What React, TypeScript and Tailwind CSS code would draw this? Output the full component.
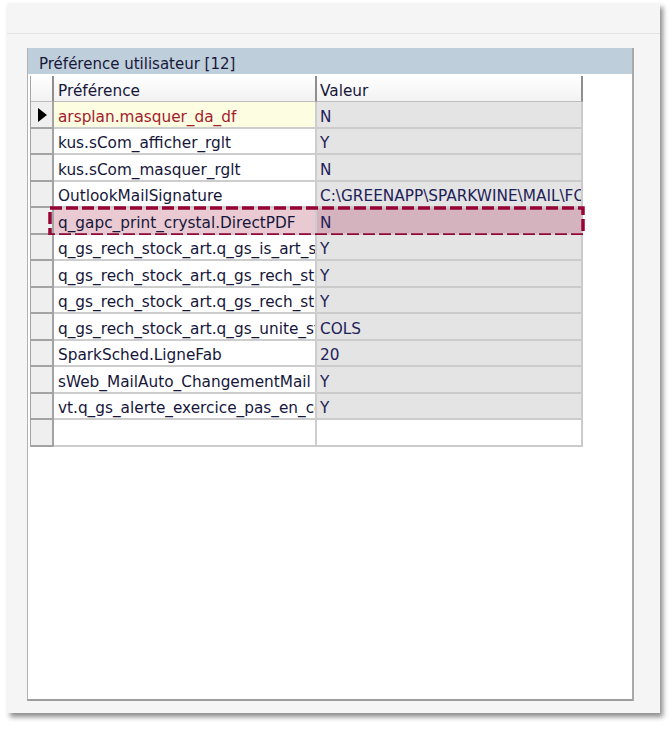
import React from 'react'

const ROWS = [
  { key: 'arsplan.masquer_da_df', value: 'N', current: true },
  { key: 'kus.sCom_afficher_rglt', value: 'Y' },
  { key: 'kus.sCom_masquer_rglt', value: 'N' },
  { key: 'OutlookMailSignature', value: 'C:\\GREENAPP\\SPARKWINE\\MAIL\\FOOTER.HTM' },
  { key: 'q_gapc_print_crystal.DirectPDF', value: 'N', marked: true },
  { key: 'q_gs_rech_stock_art.q_gs_is_art_stock', value: 'Y' },
  { key: 'q_gs_rech_stock_art.q_gs_rech_stock_lot', value: 'Y' },
  { key: 'q_gs_rech_stock_art.q_gs_rech_stock_emp', value: 'Y' },
  { key: 'q_gs_rech_stock_art.q_gs_unite_stock', value: 'COLS' },
  { key: 'SparkSched.LigneFab', value: '20' },
  { key: 'sWeb_MailAuto_ChangementMail', value: 'Y' },
  { key: 'vt.q_gs_alerte_exercice_pas_en_cours', value: 'Y' },
]

const font = { fontFamily: '"DejaVu Sans", Tahoma, Verdana, sans-serif' }

function RowHeader({ current }: { current?: boolean }) {
  return (
    <div className="w-[23px] shrink-0 bg-[#efefef] border-r-2 border-b-2 border-[#a3a3a3] flex items-center pl-[7px] pt-[2px]">
      {current && (
        <svg width="9" height="14" viewBox="0 0 9 14">
          <path d="M0 0 L9 7 L0 14 Z" fill="#000" />
        </svg>
      )}
    </div>
  )
}

export default function App() {
  return (
    <div className="min-h-[730px] bg-white pt-[3px] pl-[7px]" style={font}>
      <div className="w-[653px] h-[710px] bg-[#f5f5f5] flex flex-col shadow-[3px_4px_5px_rgba(0,0,0,0.45)]">
        <div className="h-[31px] shrink-0 border-b border-[#e3e3e3]" />
        <div className="flex-1 flex flex-col pt-[14px] pl-[20px] pr-[26px] pb-[12px]">
          <div className="flex-1 bg-white border-l border-[#b2b2b2] border-r-2 border-r-[#a9a9a9] border-b-2 border-b-[#9d9d9d] flex flex-col">
            <div className="h-[26px] bg-[#bfcedb] flex items-center pl-[11px] pt-[5px] text-[15px] leading-[18px] text-[#18183a]">
              Préférence utilisateur [12]
            </div>

            <div className="ml-[2px] mt-[2px] w-[552px] border-l border-[#a3a3a3] text-[15.3px] leading-[18px] text-[#16163a]">
              <div className="flex h-[26px]">
                <div className="w-[23px] shrink-0 bg-gradient-to-b from-white to-[#f2f2f2] border-r-2 border-b border-r-[#8e8e8e] border-b-[#bdbdbd]" />
                <div className="w-[263px] shrink-0 bg-gradient-to-b from-white to-[#f2f2f2] border-r-2 border-b border-r-[#8e8e8e] border-b-[#bdbdbd] flex items-center pl-[4px] pt-[5px]">
                  Préférence
                </div>
                <div className="w-[266px] shrink-0 bg-gradient-to-b from-white to-[#f2f2f2] border-r-2 border-b border-r-[#8e8e8e] border-b-[#bdbdbd] flex items-center pl-[3px] pt-[5px]">
                  Valeur
                </div>
              </div>

              {ROWS.map((r) => (
                <div key={r.key} className="relative flex h-[26.5px]">
                  <RowHeader current={r.current} />
                  <div
                    className={`w-[263px] shrink-0 overflow-hidden whitespace-nowrap border-r-2 border-b-2 border-[#cdcdcd] flex items-center pl-[4px] pt-[5px] ${
                      r.current ? 'bg-[#fdfde2] text-[#a3202c]' : r.marked ? 'bg-[#e9cad3]' : 'bg-white'
                    }`}
                  >
                    {r.key}
                  </div>
                  <div
                    className={`w-[266px] shrink-0 overflow-hidden whitespace-nowrap border-r-2 border-b-2 border-[#cbcbcb] flex items-center pl-[3px] pt-[5px] text-[#1d2158] ${
                      r.marked ? 'bg-[#d5b3be]' : 'bg-[#e4e4e4]'
                    }`}
                  >
                    {r.value}
                  </div>
                  {r.marked && (
                    <svg className="absolute left-[17px] top-[-2px] pointer-events-none" width="537" height="31">
                      <rect
                        x="2"
                        y="2"
                        width="533"
                        height="27"
                        fill="none"
                        stroke="#950535"
                        strokeWidth="3.5"
                        strokeDasharray="12 4"
                      />
                    </svg>
                  )}
                </div>
              ))}

              <div className="flex h-[26.5px]">
                <RowHeader />
                <div className="w-[263px] shrink-0 bg-white border-r-2 border-b-2 border-[#cdcdcd]" />
                <div className="w-[266px] shrink-0 bg-white border-r-2 border-b-2 border-[#cbcbcb]" />
              </div>
            </div>
          </div>
        </div>
      </div>
    </div>
  )
}
